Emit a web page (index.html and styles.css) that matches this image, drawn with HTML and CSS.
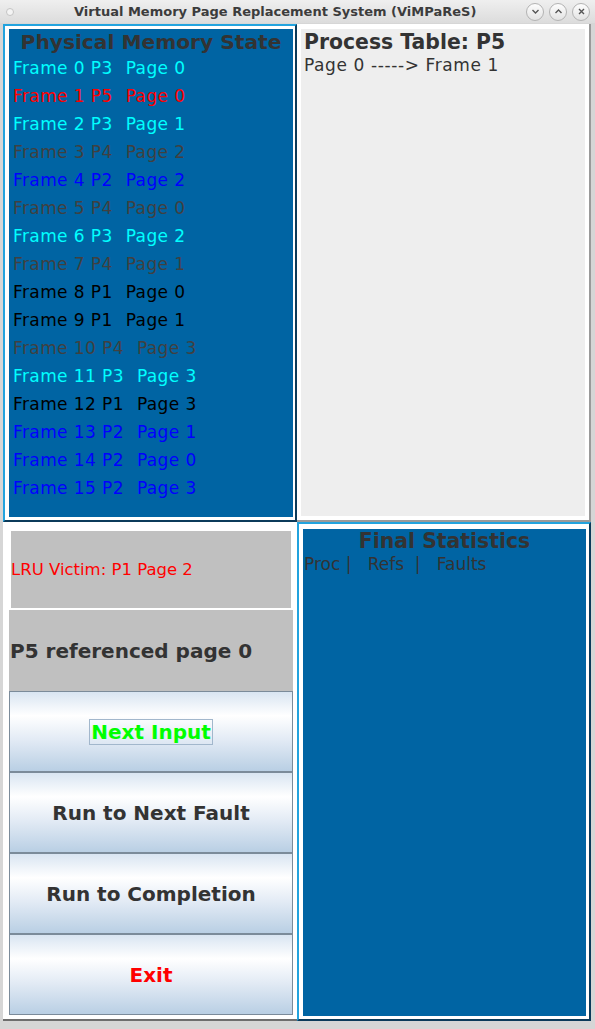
FILE: index.html
```html
<!DOCTYPE html>
<html>
<head>
<meta charset="utf-8">
<link rel="stylesheet" href="styles.css">
</head>
<body>
<header class="titlebar">
  <span class="dot"></span>
  <span class="title">Virtual Memory Page Replacement System (ViMPaReS)</span>
  <div class="wbtns">
    <span class="wbtn"><svg width="9" height="9" viewBox="0 0 9 9"><path d="M1.5 3 L4.5 6 L7.5 3" fill="none" stroke="#555" stroke-width="1.4"/></svg></span>
    <span class="wbtn"><svg width="9" height="9" viewBox="0 0 9 9"><path d="M1.5 6 L4.5 3 L7.5 6" fill="none" stroke="#555" stroke-width="1.4"/></svg></span>
    <span class="wbtn"><svg width="9" height="9" viewBox="0 0 9 9"><path d="M2 2 L7 7 M7 2 L2 7" fill="none" stroke="#555" stroke-width="1.4"/></svg></span>
  </div>
</header>
<main class="grid">
  <section class="panel blue-panel mem">
    <div class="inner">
      <h2 class="ptitle center memtitle">Physical Memory State</h2>
      <ul class="frames">
        <li class="c-cyan"><span>Frame 0 P3</span> <span>Page 0</span></li>
        <li class="c-red"><span>Frame 1 P5</span> <span>Page 0</span></li>
        <li class="c-cyan"><span>Frame 2 P3</span> <span>Page 1</span></li>
        <li class="c-gray"><span>Frame 3 P4</span> <span>Page 2</span></li>
        <li class="c-blue"><span>Frame 4 P2</span> <span>Page 2</span></li>
        <li class="c-gray"><span>Frame 5 P4</span> <span>Page 0</span></li>
        <li class="c-cyan"><span>Frame 6 P3</span> <span>Page 2</span></li>
        <li class="c-gray"><span>Frame 7 P4</span> <span>Page 1</span></li>
        <li class="c-black"><span>Frame 8 P1</span> <span>Page 0</span></li>
        <li class="c-black"><span>Frame 9 P1</span> <span>Page 1</span></li>
        <li class="c-gray"><span>Frame 10 P4</span> <span>Page 3</span></li>
        <li class="c-cyan"><span>Frame 11 P3</span> <span>Page 3</span></li>
        <li class="c-black"><span>Frame 12 P1</span> <span>Page 3</span></li>
        <li class="c-blue"><span>Frame 13 P2</span> <span>Page 1</span></li>
        <li class="c-blue"><span>Frame 14 P2</span> <span>Page 0</span></li>
        <li class="c-blue"><span>Frame 15 P2</span> <span>Page 3</span></li>
      </ul>
    </div>
  </section>
  <section class="panel gray-panel">
    <div class="inner">
      <h2 class="ptitle">Process Table: P5</h2>
      <p class="pline wide">Page 0 -----&gt; Frame 1</p>
    </div>
  </section>
  <section class="panel controls">
    <div class="victim">LRU Victim: P1 Page 2</div>
    <div class="ref">P5 referenced page 0</div>
    <button class="btn"><span class="focus">Next Input</span></button>
    <button class="btn">Run to Next Fault</button>
    <button class="btn">Run to Completion</button>
    <button class="btn exit">Exit</button>
  </section>
  <section class="panel blue-panel stats">
    <div class="inner">
      <h2 class="ptitle center stitle">Final Statistics</h2>
      <p class="pline">Proc |   Refs  |   Faults</p>
    </div>
  </section>
</main>
</body>
</html>
```
FILE: styles.css
```css
* { box-sizing: border-box; }
body {
  margin: 0;
  width: 595px;
  height: 1029px;
  overflow: hidden;
  background: #d6d6d6;
  font-family: "DejaVu Sans", sans-serif;
  color: #333333;
}
.titlebar {
  height: 23px;
  display: flex;
  align-items: center;
  background: linear-gradient(#efefef, #dcdcdc);
}
.dot {
  width: 8px;
  height: 8px;
  border-radius: 50%;
  background: #f4f4f4;
  border: 1px solid #c4c4c4;
  margin-left: 6px;
}
.title {
  font-weight: bold;
  font-size: 13px;
  color: #3c3c3c;
  margin-left: 60px;
}
.wbtns {
  margin-left: auto;
  margin-right: 5px;
  display: flex;
  gap: 5px;
}
.wbtn {
  width: 18px;
  height: 18px;
  border-radius: 50%;
  border: 1px solid #b3b3b3;
  background: linear-gradient(#fdfdfd, #e3e3e3);
  display: flex;
  align-items: center;
  justify-content: center;
}
.grid {
  display: grid;
  grid-template-columns: 294px 294px;
  grid-template-rows: 498px 499px;
  margin: 1px 4px 0 3px;
}
.panel { min-height: 0; }
.inner { height: 100%; overflow: hidden; }
.blue-panel {
  border: 2px solid;
  border-color: #22a3de #0b3a5a #0b3a5a #22a3de;
  background: #ffffff;
  padding: 3px 2px 3px 4px;
}
.blue-panel .inner { background: #0064a3; }
.gray-panel {
  background: #ffffff;
  padding: 5px 4px 4px 4px;
  border-right: 2px solid #9a9a9a;
  border-bottom: 2px solid #9a9a9a;
}
.gray-panel .inner { background: #eeeeee; }
.ptitle {
  margin: 0;
  font-size: 20.4px;
  font-weight: bold;
  line-height: 26px;
  color: #333333;
  padding-left: 3px;
  white-space: nowrap;
}
.center { text-align: center; padding-left: 0; }
.memtitle { line-height: 24px; padding-top: 1px; font-size: 20.2px; }
.frames {
  list-style: none;
  margin: 0;
  padding: 0 0 0 4px;
  font-size: 17px;
  line-height: 28px;
  letter-spacing: 0.4px;
}
.frames li {
  display: flex;
  gap: 13px;
  white-space: nowrap;
}
.pline {
  margin: 0;
  font-size: 17px;
  line-height: 20px;
  padding-left: 3px;
  white-space: pre;
}
.wide { letter-spacing: 0.6px; }
.c-cyan { color: #00ffff; }
.c-red { color: #ff0000; }
.c-gray { color: #404040; }
.c-blue { color: #0000ff; }
.c-black { color: #000000; }
.controls {
  background: #ffffff;
  border-bottom: 2px solid #6e6e6e;
  padding: 9px 4px 5px 6px;
  display: flex;
  flex-direction: column;
}
.victim {
  margin: 0 2px 2px 2px;
  height: 77px;
  flex: none;
  background: #c0c0c0;
  color: #ff0000;
  font-size: 16.5px;
  white-space: nowrap;
  display: flex;
  align-items: center;
}
.ref {
  height: 81px;
  flex: none;
  background: #c0c0c0;
  font-size: 20px;
  font-weight: bold;
  white-space: nowrap;
  display: flex;
  align-items: center;
  padding-left: 1px;
}
.btn {
  height: 81px;
  flex: none;
  border: 1px solid #7b8b9a;
  margin: 0;
  font-family: "DejaVu Sans", sans-serif;
  font-size: 20px;
  font-weight: bold;
  color: #333333;
  background: linear-gradient(#d9e5f2 0%, #ffffff 30%, #e3ebf5 60%, #b9cfe4 100%);
  display: flex;
  align-items: center;
  justify-content: center;
  padding: 0;
  white-space: nowrap;
}
.btn.exit { color: #ff0000; }
.focus {
  border: 1px solid #a2b7cc;
  padding: 1px 1px;
  color: #00ff00;
  line-height: 22px;
}
.stats { padding: 5px 3px 3px 4px; }
.stitle { line-height: 24px; }
.stats .pline { padding-left: 1px; line-height: 22px; }
```
